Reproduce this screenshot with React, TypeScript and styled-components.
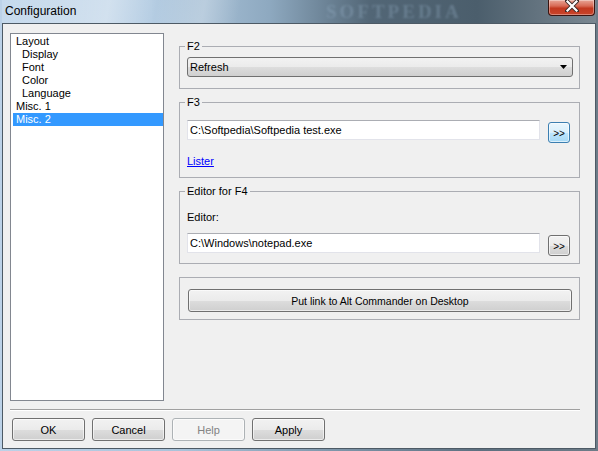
import React from "react";
import styled, { createGlobalStyle } from "styled-components";

const Global = createGlobalStyle`
  html, body { margin: 0; padding: 0; background: #f0f0f0; }
  * { box-sizing: border-box; }
`;

const Window = styled.div`
  width: 598px;
  height: 451px;
  display: flex;
  flex-direction: column;
  padding: 0 2px 2px 2px;
  background: linear-gradient(90deg, #bcd2e8 0%, #a9c3da 30%, #7f97ab 55%, #5d7080 80%, #6d7c88 100%);
  font-family: "Liberation Sans", Arial, sans-serif;
  font-size: 11px;
  color: #000;
  overflow: hidden;
`;

const TitleBar = styled.div`
  height: 23px;
  flex: none;
  display: flex;
  align-items: center;
  justify-content: space-between;
  padding-left: 3px;
  position: relative;
  background:
    linear-gradient(100deg, rgba(255,255,255,0.0) 0%, rgba(255,255,255,0.35) 18%, rgba(255,255,255,0.0) 26%, rgba(255,255,255,0.25) 34%, rgba(0,0,0,0.0) 40%),
    linear-gradient(90deg, #c6daed 0%, #b5cde3 25%, #8ea9c0 45%, #526676 62%, #4b5e6c 80%, #7a8791 100%);
`;

const Title = styled.span`
  font-family: "Liberation Sans", Arial, sans-serif;
  font-size: 12px;
  color: #000;
  padding-bottom: 2px;
`;

const Watermark = styled.span`
  position: absolute;
  left: 324px;
  top: 2px;
  line-height: 19px;
  font-family: "Liberation Serif", serif;
  font-weight: bold;
  font-size: 19px;
  letter-spacing: 3px;
  color: rgba(160, 185, 210, 0.3);
  filter: blur(1.2px);
  pointer-events: none;
`;

const CloseButton = styled.div`
  align-self: flex-start;
  width: 47px;
  height: 16px;
  margin-right: 1px;
  border: 1px solid #3a1410;
  border-top: none;
  border-radius: 0 0 4px 4px;
  background: linear-gradient(180deg, #e8a596 0%, #d86a55 40%, #c2381f 55%, #c9452b 100%);
  box-shadow: inset 0 0 0 1px rgba(255,255,255,0.35);
  display: flex;
  align-items: flex-start;
  justify-content: center;
`;

const Client = styled.div`
  flex: 1;
  background: #f0f0f0;
  border: 1px solid #4d5a65;
  display: flex;
  flex-direction: column;
  padding: 9px 15px 0 7px;
`;

const MainRow = styled.div`
  display: flex;
  align-items: flex-start;
`;

const Tree = styled.div`
  width: 154px;
  height: 368px;
  flex: none;
  background: #fff;
  border: 1px solid #828790;
  padding: 1px 0 1px 2px;
  display: flex;
  flex-direction: column;
`;

const TreeItem = styled.div<{ $indent?: boolean; $selected?: boolean }>`
  height: 13px;
  line-height: 13px;
  padding-left: ${(p) => (p.$indent ? 9 : 3)}px;
  background: ${(p) => (p.$selected ? "#3399ff" : "transparent")};
  color: ${(p) => (p.$selected ? "#fff" : "#000")};
  white-space: nowrap;
`;

const RightCol = styled.div`
  margin-left: 15px;
  margin-top: 13px;
  width: 401px;
  display: flex;
  flex-direction: column;
  gap: 13px;
`;

const Group = styled.div<{ $pt: number; $pb: number }>`
  position: relative;
  border: 1px solid #abadb3;
  padding: ${(p) => p.$pt}px 6px ${(p) => p.$pb}px 7px;
  display: flex;
  flex-direction: column;
`;

const Legend = styled.span`
  position: absolute;
  left: 5px;
  top: -7px;
  padding: 0 2px 0 2px;
  line-height: 13px;
  background: #f0f0f0;
`;

const Combo = styled.div`
  height: 20px;
  border: 1px solid #707070;
  border-radius: 3px;
  background: linear-gradient(180deg, #f2f2f2 0%, #ebebeb 50%, #dddddd 51%, #cfcfcf 100%);
  display: flex;
  align-items: center;
  justify-content: space-between;
  padding: 0 5px 0 2px;
`;

const InputRow = styled.div`
  display: flex;
  align-items: flex-start;
  gap: 8px;
`;

const TextInput = styled.div`
  width: 353px;
  height: 20px;
  background: #fff;
  border: 1px solid #e2e3ea;
  border-top-color: #abadb3;
  padding: 0 2px;
  display: flex;
  align-items: center;
  white-space: nowrap;
`;

const SmallButton = styled.div<{ $focus?: boolean }>`
  width: 22px;
  height: 21px;
  margin-top: 2px;
  border: 1px solid ${(p) => (p.$focus ? "#3c7fb1" : "#707070")};
  border-radius: 3px;
  background: ${(p) =>
    p.$focus
      ? "linear-gradient(180deg, #eaf6fd 0%, #d9f0fc 50%, #bee6fd 51%, #a7d9f5 100%)"
      : "linear-gradient(180deg, #f2f2f2 0%, #ebebeb 50%, #dddddd 51%, #cfcfcf 100%)"};
  box-shadow: inset 0 0 0 1px rgba(255,255,255,0.6);
  display: flex;
  align-items: center;
  justify-content: center;
  font-size: 10px;
  padding-top: 1px;
`;

const Link = styled.span`
  margin-top: 12px;
  line-height: 13px;
  color: #0000ff;
  text-decoration: underline;
  align-self: flex-start;
`;

const Label = styled.span`
  line-height: 13px;
  margin-bottom: 9px;
`;

const WideButton = styled.div`
  height: 23px;
  border: 1px solid #707070;
  border-radius: 3px;
  background: linear-gradient(180deg, #f2f2f2 0%, #ebebeb 50%, #dddddd 51%, #cfcfcf 100%);
  box-shadow: inset 0 0 0 1px rgba(255,255,255,0.6);
  display: flex;
  align-items: center;
  justify-content: center;
  margin-left: 1px;
  margin-right: 1px;
  font-size: 10.5px;
`;

const Separator = styled.div`
  margin-top: 8px;
  height: 2px;
  border-top: 1px solid #a0a0a0;
  border-bottom: 1px solid #ffffff;
`;

const ButtonRow = styled.div`
  display: flex;
  gap: 7px;
  padding-left: 2px;
  margin-top: 7px;
`;

const DialogButton = styled.div<{ $disabled?: boolean }>`
  width: 73px;
  height: 23px;
  border: 1px solid ${(p) => (p.$disabled ? "#adb2b5" : "#707070")};
  border-radius: 3px;
  background: ${(p) =>
    p.$disabled
      ? "#f4f4f4"
      : "linear-gradient(180deg, #f2f2f2 0%, #ebebeb 50%, #dddddd 51%, #cfcfcf 100%)"};
  box-shadow: inset 0 0 0 1px rgba(255,255,255,0.6);
  color: ${(p) => (p.$disabled ? "#838383" : "#000")};
  display: flex;
  align-items: center;
  justify-content: center;
`;

const ArrowDown = () => (
  <svg width="7" height="4" viewBox="0 0 7 4">
    <path d="M0 0 H7 L3.5 4 Z" fill="#000" />
  </svg>
);

const CloseX = () => (
  <svg width="14" height="12" viewBox="0 0 14 12">
    <path d="M2 1 L12 11 M12 1 L2 11" stroke="#3a2a28" strokeWidth="4" strokeLinecap="square" />
    <path d="M2.5 1.5 L11.5 10.5 M11.5 1.5 L2.5 10.5" stroke="#ffffff" strokeWidth="2.2" strokeLinecap="square" />
  </svg>
);

export default function App() {
  return (
    <>
      <Global />
      <Window>
        <TitleBar>
          <Title>Configuration</Title>
          <Watermark>SOFTPEDIA</Watermark>
          <CloseButton>
            <CloseX />
          </CloseButton>
        </TitleBar>
        <Client>
          <MainRow>
            <Tree>
              <TreeItem>Layout</TreeItem>
              <TreeItem $indent>Display</TreeItem>
              <TreeItem $indent>Font</TreeItem>
              <TreeItem $indent>Color</TreeItem>
              <TreeItem $indent>Language</TreeItem>
              <TreeItem>Misc. 1</TreeItem>
              <TreeItem $selected>Misc. 2</TreeItem>
            </Tree>
            <RightCol>
              <Group $pt={10} $pb={11}>
                <Legend>F2</Legend>
                <Combo>
                  <span>Refresh</span>
                  <ArrowDown />
                </Combo>
              </Group>
              <Group $pt={17} $pb={9}>
                <Legend>F3</Legend>
                <InputRow>
                  <TextInput>C:\Softpedia\Softpedia test.exe</TextInput>
                  <SmallButton $focus>&gt;&gt;</SmallButton>
                </InputRow>
                <Link>Lister</Link>
              </Group>
              <Group $pt={19} $pb={7}>
                <Legend>Editor for F4</Legend>
                <Label>Editor:</Label>
                <InputRow>
                  <TextInput>C:\Windows\notepad.exe</TextInput>
                  <SmallButton>&gt;&gt;</SmallButton>
                </InputRow>
              </Group>
              <Group $pt={11} $pb={7}>
                <WideButton>Put link to Alt Commander on Desktop</WideButton>
              </Group>
            </RightCol>
          </MainRow>
          <Separator />
          <ButtonRow>
            <DialogButton>OK</DialogButton>
            <DialogButton>Cancel</DialogButton>
            <DialogButton $disabled>Help</DialogButton>
            <DialogButton>Apply</DialogButton>
          </ButtonRow>
        </Client>
      </Window>
    </>
  );
}
